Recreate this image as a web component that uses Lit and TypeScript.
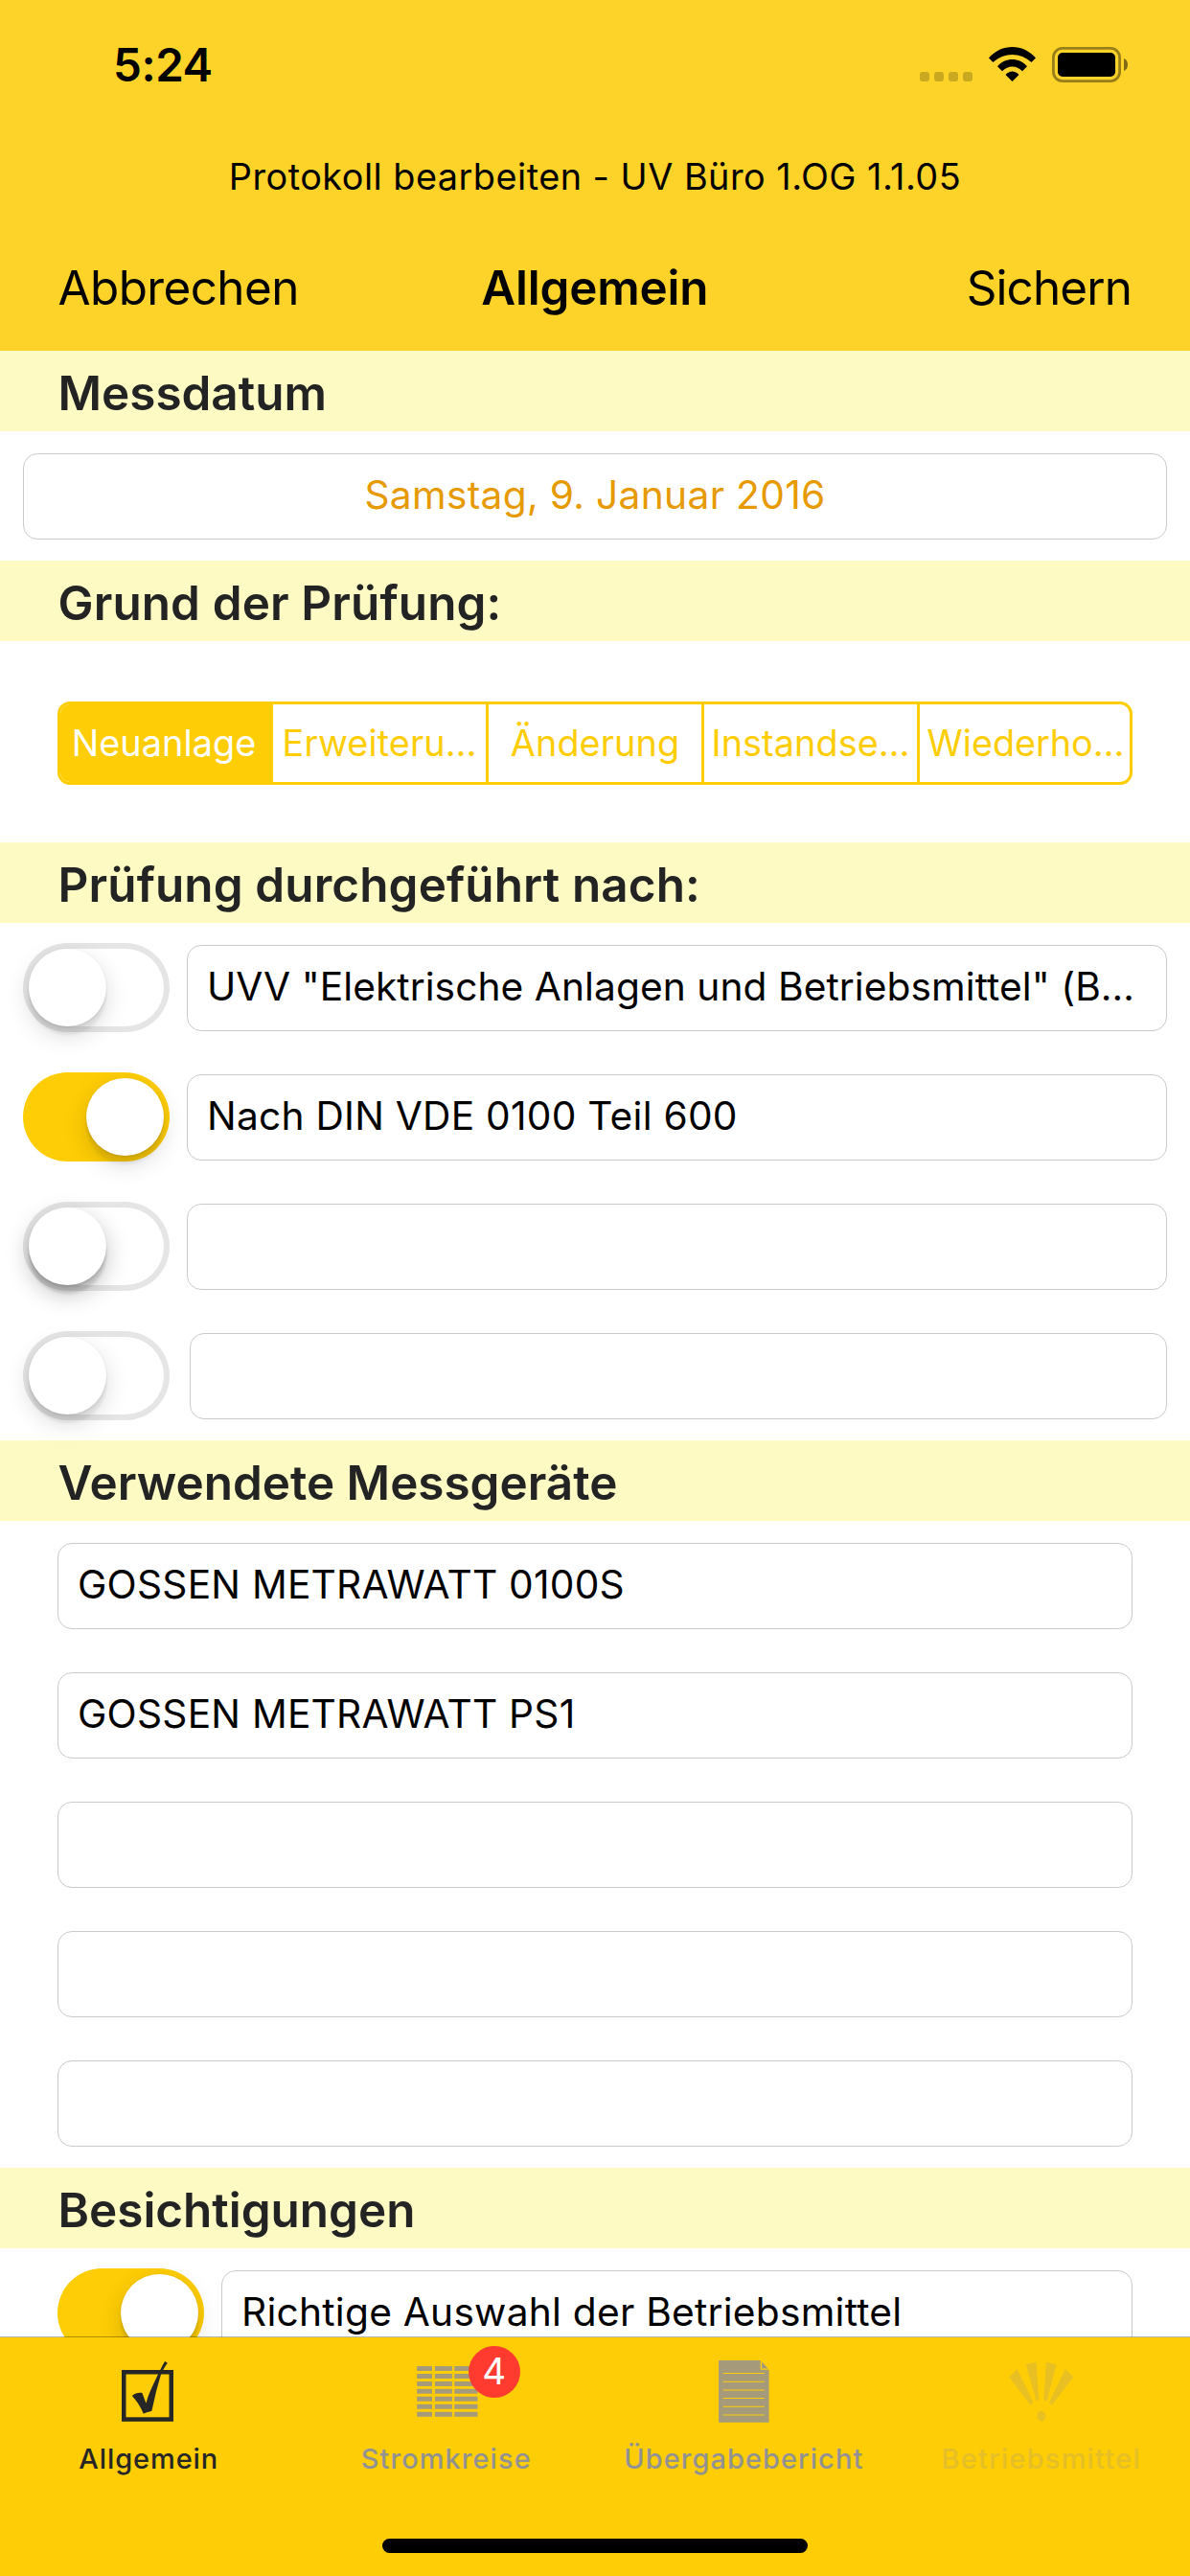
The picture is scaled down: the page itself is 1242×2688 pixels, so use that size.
import { LitElement, html, css, svg, nothing } from "lit";
import { customElement, property } from "lit/decorators.js";
import { classMap } from "lit/directives/class-map.js";

@customElement("toggle-switch")
class ToggleSwitch extends LitElement {
  @property({ type: Boolean }) on = false;
  @property({ type: Boolean }) deep = false;

  static styles = css`
    :host {
      display: block;
      flex: none;
    }
    .track {
      display: flex;
      box-sizing: border-box;
      width: 153px;
      height: 93px;
      padding: 6px;
      border-radius: 46.5px;
      background: #fff;
      box-shadow: inset 0 0 0 6px #e5e5e5;
    }
    .track.on {
      justify-content: flex-end;
      background: #fecd05;
      box-shadow: none;
    }
    .thumb {
      width: 81px;
      height: 81px;
      border-radius: 50%;
      background: #fff;
      box-shadow: 0 9px 24px rgba(0, 0, 0, 0.15), 0 9px 3px rgba(0, 0, 0, 0.06),
        0 1px 3px rgba(0, 0, 0, 0.1);
    }
    .thumb.deep {
      box-shadow: 0 9px 24px rgba(0, 0, 0, 0.25), 0 9px 3px rgba(0, 0, 0, 0.12),
        0 2px 3px rgba(0, 0, 0, 0.12);
    }
  `;

  render() {
    return html`<div class=${classMap({ track: true, on: this.on })}>
      <div class=${classMap({ thumb: true, deep: this.deep })}></div>
    </div>`;
  }
}

interface Check {
  text: string;
  on: boolean;
  deep?: boolean;
  narrow?: boolean;
  long?: boolean;
}

const SEGMENTS = ["Neuanlage", "Erweiteru…", "Änderung", "Instandse…", "Wiederho…"];

const CHECKS: Check[] = [
  { text: 'UVV "Elektrische Anlagen und Betriebsmittel" (B…', on: false, long: true },
  { text: "Nach DIN VDE 0100 Teil 600", on: true },
  { text: "", on: false, deep: true },
  { text: "", on: false, narrow: true },
];

const DEVICES = ["GOSSEN METRAWATT 0100S", "GOSSEN METRAWATT PS1", "", "", ""];

const checkIcon = svg`
  <rect x="24.25" y="20.25" width="49.5" height="49.3" fill="none" stroke="currentColor" stroke-width="4.5"/>
  <path fill="currentColor" d="M67.1 9 69.8 10.7C67 15 64.6 18.6 63.1 22.3L58.1 40 53.4 60.7C50.6 61.6 47.5 62.4 44.8 63.7 41.5 56 37.5 50 32.8 45 36 42.3 39.5 41.4 43.4 42L47.4 52.7C50 43 54 35 58 26.7 61.5 20 63.8 14 67.1 9Z"/>`;

const gridIcon = svg`${[0, 1, 2, 3, 4, 5, 6].map((i) => {
  const y = 14 + i * 7.95;
  return svg`<path fill="#a59b7b" d="M19.2 ${y}h15.8v5h-15.8zM37.9 ${y}h18v5h-18zM58.3 ${y}h24.2v5h-24.2z"/>`;
})}`;

const docIcon = svg`
  <path fill="#a59b7b" d="M24 8H67.7V17.7H76.6V72.7H24ZM69 9.5 75.6 16.4H69Z"/>
  <g stroke="#fecd05">
    <path d="M28.7 21.5H71.8M28.7 30.3H71.8M28.7 47.5H71.8M28.7 56.3H71.8" stroke-width="1.1"/>
    <path d="M28.7 39H71.8M28.7 65H71.8" stroke-width="1.7" opacity=".65"/>
  </g>`;

const fanIcon = svg`
  <g fill="#e8c023">
    <path d="M16.2 25.3 24.6 17 41.3 51.7 38.6 54.7ZM33.6 12.3 44.6 9.7 47.3 49.7 44.6 50.3ZM54.9 9.7 65.6 12.3 55.6 50.3 52.2 49.7ZM74.9 17 83.3 25.3 60.9 54.7 57.9 52Z"/>
    <ellipse cx="49.9" cy="66" rx="4.5" ry="5.4"/>
  </g>`;

const TABS = [
  { label: "Allgemein", icon: checkIcon, tone: "active", badge: "" },
  { label: "Stromkreise", icon: gridIcon, tone: "", badge: "4" },
  { label: "Übergabebericht", icon: docIcon, tone: "", badge: "" },
  { label: "Betriebsmittel", icon: fanIcon, tone: "disabled", badge: "" },
];

@customElement("app-root")
class AppRoot extends LitElement {
  static styles = css`
    :host {
      display: block;
      font-family: Inter, "Liberation Sans", sans-serif;
      color: #000;
    }
    .screen {
      display: flex;
      flex-direction: column;
      width: 1242px;
      height: 2688px;
      overflow: hidden;
      background: #fff;
      white-space: nowrap;
    }
    .head {
      flex: none;
      height: 366px;
      background: #fdd329;
    }
    .status {
      display: flex;
      justify-content: space-between;
      align-items: flex-start;
      box-sizing: border-box;
      height: 132px;
      padding: 0 65px 0 118px;
    }
    .time {
      padding-top: 39px;
      font-size: 47.5px;
      line-height: 57px;
      font-weight: 600;
      letter-spacing: -0.42px;
    }
    .indicators {
      display: flex;
      gap: 17px;
      padding-top: 49px;
    }
    .dots {
      display: flex;
      gap: 5px;
      padding-top: 26px;
    }
    .dot {
      width: 10px;
      height: 10px;
      border-radius: 3px;
      background: rgba(0, 0, 0, 0.2);
    }
    svg {
      display: block;
    }
    .subject {
      height: 102px;
      box-sizing: border-box;
      padding-top: 29px;
      text-align: center;
      font-size: 37.8px;
      line-height: 46px;
      letter-spacing: 0.49px;
    }
    .nav {
      display: grid;
      grid-template-columns: 1fr auto 1fr;
      align-items: center;
      height: 132px;
      padding: 0 61px 0 60.5px;
      font-size: 49.4px;
      line-height: 60px;
    }
    .cancel {
      letter-spacing: -0.58px;
    }
    .title {
      font-weight: 600;
      letter-spacing: -0.19px;
    }
    .save {
      text-align: right;
      letter-spacing: -0.87px;
    }
    .form {
      flex: none;
      height: 2073px;
      overflow: hidden;
    }
    .band {
      box-sizing: border-box;
      height: 84px;
      padding: 14px 60.5px 10px;
      background: #fefac3;
      color: #232323;
      font-size: 49.4px;
      line-height: 60px;
      font-weight: 600;
    }
    .band.loose {
      letter-spacing: 0.14px;
    }
    .row {
      display: flex;
      align-items: flex-start;
      gap: 18px;
      box-sizing: border-box;
      height: 135px;
      padding: 21px 24px 0;
    }
    .row.inset {
      padding: 21px 60px 0;
    }
    .row.narrow {
      gap: 21px;
    }
    .field {
      flex: 1;
      min-width: 0;
      box-sizing: border-box;
      height: 90px;
      margin-top: 2px;
      padding: 18px 20px 0;
      border: 1px solid #cacaca;
      border-radius: 15px;
      font-size: 40.7px;
      line-height: 49px;
      letter-spacing: 0.24px;
    }
    .field.long {
      letter-spacing: 0.06px;
    }
    .field.date {
      text-align: center;
      color: #e69a00;
      letter-spacing: 0.31px;
    }
    .reason {
      box-sizing: border-box;
      height: 210px;
      padding: 63px 60px 0;
    }
    .segments {
      display: grid;
      grid-template-columns: 222px 225px 225px 225px 219px;
      box-sizing: border-box;
      height: 87px;
      border: 3px solid #fecd05;
      border-radius: 13px;
      overflow: hidden;
    }
    .segment {
      box-sizing: border-box;
      padding-top: 17px;
      border-right: 3px solid #fecd05;
      color: #fecd05;
      font-size: 37.8px;
      line-height: 46px;
      letter-spacing: 0.08px;
      text-align: center;
    }
    .segment:last-child {
      padding-left: 2px;
      border-right: none;
      letter-spacing: -0.04px;
    }
    .segment.selected {
      padding-right: 3px;
      background: #fecd05;
      color: #fff;
    }
    .tabs {
      position: relative;
      flex: none;
      box-sizing: border-box;
      height: 250px;
      margin-top: -1px;
      border-top: 1px solid rgba(0, 0, 0, 0.3);
      background: #fecd05;
      background-clip: padding-box;
    }
    .items {
      display: grid;
      grid-template-columns: repeat(4, 1fr);
      height: 210px;
    }
    .tab {
      display: flex;
      flex-direction: column;
      align-items: center;
      padding-top: 16px;
      color: #929292;
      font-size: 29px;
      line-height: 35px;
      font-weight: 500;
      letter-spacing: 1.05px;
    }
    .tab.active {
      color: #262626;
      letter-spacing: 0.9px;
    }
    .tab.disabled {
      color: #e5be28;
      letter-spacing: 1.2px;
    }
    .glyph {
      position: relative;
      height: 93px;
    }
    .badge {
      position: absolute;
      left: 73px;
      top: -7px;
      box-sizing: border-box;
      width: 54px;
      height: 54px;
      padding-top: 3px;
      border-radius: 50%;
      background: #ff3b30;
      color: #fff;
      font-size: 38.5px;
      line-height: 46px;
      font-weight: 400;
      letter-spacing: 0;
      text-align: center;
    }
    .home {
      width: 444px;
      height: 15px;
      margin: 0 auto;
      border-radius: 7.5px;
      background: #000;
    }
  `;

  private renderHead() {
    return html`<header class="head">
      <div class="status">
        <div class="time">5:24</div>
        <div class="indicators">
          <div class="dots">${[0, 1, 2, 3].map(() => html`<div class="dot"></div>`)}</div>
          <svg width="49" height="36" viewBox="0 0 49 36">
            <path d="M0 11.5C13.5-3.8 35.5-3.8 49 11.5L44.5 16C33 5.3 16 5.3 4.5 16Z" />
            <path d="M9 20.3C17.5 10.6 31.5 10.6 40 20.3L35 25.3C29 19 20 19 14 25.3Z" />
            <path d="M17.5 29C21.5 24.2 27.5 24.2 31.5 29L24.5 36Z" />
          </svg>
          <svg width="79" height="37" viewBox="0 0 79 37">
            <rect x="1.4" y="1.4" width="69.2" height="34.2" rx="9.5" fill="none" stroke="#000" stroke-opacity=".4" stroke-width="2.8" />
            <rect x="6" y="6" width="60" height="25" rx="5" />
            <path d="M75 12C78.2 13.5 79 16 79 18.5S78.2 23.500 75 25Z" fill-opacity=".5" />
          </svg>
        </div>
      </div>
      <div class="subject">Protokoll bearbeiten - UV Büro 1.OG 1.1.05</div>
      <nav class="nav">
        <div class="cancel">Abbrechen</div>
        <div class="title">Allgemein</div>
        <div class="save">Sichern</div>
      </nav>
    </header>`;
  }

  private renderCheck(c: Check, inset = false) {
    return html`<div class=${classMap({ row: true, inset, narrow: !!c.narrow })}>
      <toggle-switch ?on=${c.on} ?deep=${!!c.deep}></toggle-switch>
      <div class=${classMap({ field: true, long: !!c.long })}>${c.text}</div>
    </div>`;
  }

  render() {
    return html`<div class="screen">
      ${this.renderHead()}
      <main class="form">
        <div class="band">Messdatum</div>
        <div class="row"><div class="field date">Samstag, 9. Januar 2016</div></div>
        <div class="band loose">Grund der Prüfung:</div>
        <div class="reason">
          <div class="segments">
            ${SEGMENTS.map(
              (s, i) => html`<div class=${classMap({ segment: true, selected: i === 0 })}>${s}</div>`
            )}
          </div>
        </div>
        <div class="band loose">Prüfung durchgeführt nach:</div>
        ${CHECKS.map((c) => this.renderCheck(c))}
        <div class="band">Verwendete Messgeräte</div>
        ${DEVICES.map((d) => html`<div class="row inset"><div class="field">${d}</div></div>`)}
        <div class="band">Besichtigungen</div>
        ${this.renderCheck({ text: "Richtige Auswahl der Betriebsmittel", on: true }, true)}
      </main>
      <footer class="tabs">
        <div class="items">
          ${TABS.map(
            (t) => html`<div class="tab ${t.tone}">
              <div class="glyph">
                <svg width="100" height="80" viewBox="0 0 100 80">${t.icon}</svg>
                ${t.badge ? html`<div class="badge">${t.badge}</div>` : nothing}
              </div>
              <div>${t.label}</div>
            </div>`
          )}
        </div>
        <div class="home"></div>
      </footer>
    </div>`;
  }
}
